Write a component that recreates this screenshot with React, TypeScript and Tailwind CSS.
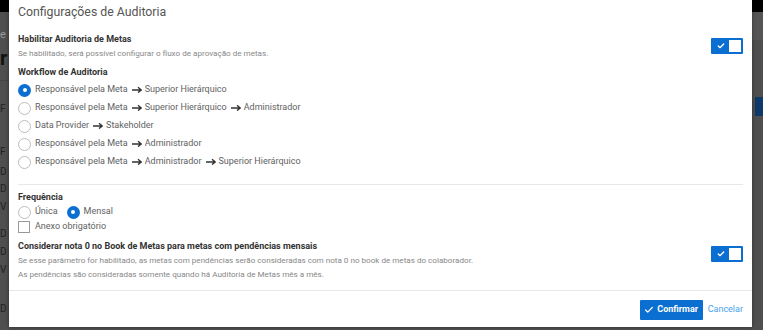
import { Check } from "lucide-react";

const workflows = [
  ["Responsável pela Meta", "Superior Hierárquico"],
  ["Responsável pela Meta", "Superior Hierárquico", "Administrador"],
  ["Data Provider", "Stakeholder"],
  ["Responsável pela Meta", "Administrador"],
  ["Responsável pela Meta", "Administrador", "Superior Hierárquico"],
];

function Radio({ checked }: { checked?: boolean }) {
  if (checked) {
    return (
      <span className="flex h-[13px] w-[13px] shrink-0 items-center justify-center rounded-full bg-[#0b6fd1]">
        <span className="h-[4px] w-[4px] rounded-full bg-white" />
      </span>
    );
  }
  return <span className="h-[13px] w-[13px] shrink-0 rounded-full border border-[#bdbdbd] bg-white" />;
}

function Toggle() {
  return (
    <div className="flex h-[16px] w-[32px] shrink-0 items-center justify-between rounded-[1px] bg-[#0b6fd1] pl-[6px] pr-[2px]">
      <Check className="h-[8px] w-[8px] text-white" strokeWidth={4} />
      <span className="h-[12px] w-[12px] bg-white" />
    </div>
  );
}

function Arrow() {
  return (
    <svg className="ml-[4px] mr-[3px] inline-block align-[-1px]" width="10" height="7" viewBox="0 0 10 7" fill="none">
      <path d="M0 4h9M6 1.2 9.2 4 6 6.6" stroke="#333" strokeWidth="1.3" />
    </svg>
  );
}

export default function App() {
  return (
    <div className="relative h-[330px] w-[763px] overflow-hidden bg-[#4f4f4f] font-['Roboto',sans-serif]">
      {/* page behind the overlay */}
      <div className="h-[12px] w-full bg-black" />
      <div className="absolute left-0 top-[27px] text-[11px] text-[#999]">e</div>
      <div className="absolute left-0 top-[43px] text-[20px] font-bold text-[#111]">r</div>
      <div className="absolute left-0 top-[80px] h-px w-[9px] bg-[#444]" />
      <div className="absolute left-0 top-[101px] text-[10px] text-[#222]">F</div>
      <div className="absolute left-0 top-[144px] text-[10px] text-[#222]">F</div>
      <div className="absolute left-0 top-[164px] text-[10px] text-[#222]">D</div>
      <div className="absolute left-0 top-[181px] text-[10px] text-[#222]">D</div>
      <div className="absolute left-0 top-[199px] text-[10px] text-[#222]">V</div>
      <div className="absolute left-0 top-[226px] text-[10px] text-[#222]">D</div>
      <div className="absolute left-0 top-[244px] text-[10px] text-[#222]">D</div>
      <div className="absolute left-0 top-[262px] text-[10px] text-[#222]">V</div>
      <div className="absolute left-0 top-[301px] text-[10px] text-[#222]">D</div>
      <div className="absolute right-0 top-[97px] h-[19px] w-[8px] bg-[#0d3a6b]" />
      <div className="absolute right-0 top-[12px] h-[28px] w-[11px] bg-[#555]" />

      {/* modal */}
      <div className="absolute left-[9px] top-0 flex h-[327px] w-[743px] flex-col bg-white shadow-[0_0_4px_rgba(0,0,0,0.4)]">
        <div className="px-[9px]">
          <div className="text-[12.3px] leading-[24px] text-[#555]">Configurações de Auditoria</div>

          <div className="mt-[8px] flex items-start justify-between">
            <div>
              <div className="text-[9px] font-bold leading-[14px] text-[#333]">Habilitar Auditoria de Metas</div>
              <div className="text-[8.1px] leading-[15px] text-[#888]">
                Se habilitado, será possível configurar o fluxo de aprovação de metas.
              </div>
            </div>
            <div className="mt-[6px]">
              <Toggle />
            </div>
          </div>

          <div className="mt-[4px] text-[9px] font-bold leading-[14px] text-[#333]">Workflow de Auditoria</div>
          <div className="mt-[2px] flex flex-col">
            {workflows.map((steps, i) => (
              <div key={i} className="flex h-[18px] items-center gap-[4px]">
                <Radio checked={i === 0} />
                <span className="text-[9px] text-[#616161]">
                  {steps.map((s, j) => (
                    <span key={j}>
                      {j > 0 && <Arrow />}
                      {s}
                    </span>
                  ))}
                </span>
              </div>
            ))}
          </div>

          <div className="mt-[13px] h-px bg-[#e8e8e8]" />

          <div className="mt-[5px] text-[9px] font-bold leading-[14px] text-[#333]">Frequência</div>
          <div className="flex h-[16px] items-center text-[9px] text-[#616161]">
            <Radio />
            <span className="ml-[4px]">Única</span>
            <span className="ml-[9px]">
              <Radio checked />
            </span>
            <span className="ml-[4px]">Mensal</span>
          </div>
          <div className="flex h-[14px] items-center gap-[5px] text-[9px] text-[#616161]">
            <span className="h-[12px] w-[12px] border border-[#999] bg-white" />
            Anexo obrigatório
          </div>

          <div className="mt-[5px] flex items-start justify-between">
            <div>
              <div className="text-[9px] font-bold leading-[14px] text-[#333]">
                Considerar nota 0 no Book de Metas para metas com pendências mensais
              </div>
              <div className="text-[8.1px] leading-[14px] text-[#888]">
                Se esse parâmetro for habilitado, as metas com pendências serão consideradas com nota 0 no book de metas do colaborador.
              </div>
              <div className="text-[8.1px] leading-[14px] text-[#888]">
                As pendências são consideradas somente quando há Auditoria de Metas mês a mês.
              </div>
            </div>
            <div className="mt-[7px]">
              <Toggle />
            </div>
          </div>
        </div>

        <div className="mt-[9px] h-px bg-[#e8e8e8]" />

        <div className="flex items-center justify-end gap-[5px] px-[9px] pt-[9px]">
          <button className="flex h-[20px] w-[63px] items-center justify-center gap-[3px] rounded-[1px] bg-[#0b6fd1] text-[9px] font-bold text-white">
            <Check className="h-[10px] w-[10px]" strokeWidth={3} />
            Confirmar
          </button>
          <span className="text-[9px] text-[#4aa3f0]">Cancelar</span>
        </div>
      </div>
    </div>
  );
}
